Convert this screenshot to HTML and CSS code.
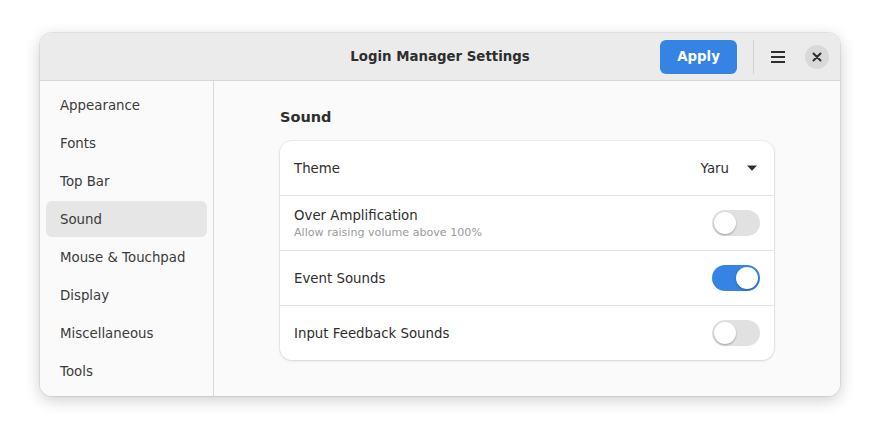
FILE: index.html
```html
<!DOCTYPE html>
<html>
<head>
<meta charset="utf-8">
<link rel="stylesheet" href="styles.css">
</head>
<body>
<div class="window">
  <header class="headerbar">
    <div class="title">Login Manager Settings</div>
    <div class="actions">
      <button class="apply">Apply</button>
      <span class="sep"></span>
      <button class="menu" aria-label="Menu">
        <svg width="16" height="16" viewBox="0 0 16 16"><rect x="1" y="2" width="14" height="2" fill="#2e2e2e"/><rect x="1" y="7" width="14" height="2" fill="#2e2e2e"/><rect x="1" y="12" width="14" height="2" fill="#2e2e2e"/></svg>
      </button>
      <button class="close" aria-label="Close">
        <svg width="10" height="10" viewBox="0 0 10 10"><path d="M1.5 1.5 L8.5 8.5 M8.5 1.5 L1.5 8.5" stroke="#2e2e2e" stroke-width="2" stroke-linecap="round"/></svg>
      </button>
    </div>
  </header>
  <div class="body">
    <nav class="sidebar">
      <div class="nav-item">Appearance</div>
      <div class="nav-item">Fonts</div>
      <div class="nav-item">Top Bar</div>
      <div class="nav-item active">Sound</div>
      <div class="nav-item">Mouse &amp; Touchpad</div>
      <div class="nav-item">Display</div>
      <div class="nav-item">Miscellaneous</div>
      <div class="nav-item">Tools</div>
    </nav>
    <main class="content">
      <div class="group">
        <h2 class="group-title">Sound</h2>
        <div class="card">
          <div class="row">
            <div class="label">Theme</div>
            <div class="dropdown">
              <span>Yaru</span>
              <svg width="10" height="6" viewBox="0 0 10 6"><path d="M0 0.5 L10 0.5 L5 5.8 Z" fill="#2e2e2e"/></svg>
            </div>
          </div>
          <div class="row">
            <div class="label">Over Amplification<div class="sub">Allow raising volume above 100%</div></div>
            <div class="switch"><span class="knob"></span></div>
          </div>
          <div class="row">
            <div class="label">Event Sounds</div>
            <div class="switch on"><span class="knob"></span></div>
          </div>
          <div class="row">
            <div class="label">Input Feedback Sounds</div>
            <div class="switch"><span class="knob"></span></div>
          </div>
        </div>
      </div>
    </main>
  </div>
</div>
</body>
</html>
```
FILE: styles.css
```css
* { box-sizing: border-box; }
html, body { margin: 0; padding: 0; }
body {
  background: #ffffff;
  font-family: "DejaVu Sans", "Noto Sans", sans-serif;
  font-size: 13.33px;
  color: #2e2e2e;
  padding: 33px 40px;
  height: 442px;
}
.window {
  width: 800px;
  height: 363px;
  border-radius: 12px;
  overflow: hidden;
  background: #fafafa;
  box-shadow: 0 4px 16px rgba(0,0,0,0.2), 0 0 0 1px rgba(0,0,0,0.07);
  display: flex;
  flex-direction: column;
}
.headerbar {
  height: 48px;
  flex: none;
  background: #ebebeb;
  border-bottom: 1px solid #d6d6d6;
  position: relative;
  display: flex;
  align-items: center;
  justify-content: flex-end;
  padding: 0 11px 0 6px;
}
.title {
  position: absolute;
  left: 0;
  right: 0;
  top: 0;
  bottom: 0;
  display: flex;
  align-items: center;
  justify-content: center;
  font-weight: bold;
  font-size: 13.33px;
  color: #2e2e2e;
  pointer-events: none;
}
.actions {
  display: flex;
  align-items: center;
  position: relative;
}
button {
  font-family: inherit;
  border: none;
  cursor: default;
}
.apply {
  width: 77px;
  height: 34px;
  border-radius: 6px;
  background: #3584e4;
  color: #ffffff;
  font-weight: bold;
  font-size: 13.33px;
  margin-right: 16px;
}
.sep {
  width: 1px;
  height: 34px;
  background: #d3d3d3;
  margin-right: 8px;
}
.menu {
  width: 32px;
  height: 32px;
  background: transparent;
  display: flex;
  align-items: center;
  justify-content: center;
  padding: 0;
  margin-right: 11px;
}
.close {
  width: 24px;
  height: 24px;
  border-radius: 50%;
  background: #d9d9d9;
  display: flex;
  align-items: center;
  justify-content: center;
  padding: 0;
}
.body {
  flex: 1;
  display: flex;
  min-height: 0;
}
.sidebar {
  width: 174px;
  flex: none;
  background: #fafafa;
  border-right: 1px solid #d9d9d9;
  padding: 6px 6px;
  display: flex;
  flex-direction: column;
  gap: 2px;
}
.nav-item {
  height: 36px;
  display: flex;
  align-items: center;
  padding: 0 14px;
  border-radius: 6px;
  color: #3a3a3a;
}
.nav-item.active {
  background: #e6e6e6;
}
.content {
  flex: 1;
  background: #fafafa;
  display: flex;
  justify-content: center;
  padding-top: 26px;
}
.group { width: 494px; }
.group-title {
  margin: 0 0 14px 0;
  font-size: 14.5px;
  font-weight: bold;
  color: #2e2e2e;
  line-height: 20px;
}
.card {
  background: #ffffff;
  border-radius: 12px;
  box-shadow: 0 0 0 1px rgba(0,0,0,0.05), 0 1px 3px rgba(0,0,0,0.1);
}
.row {
  height: 55px;
  display: flex;
  align-items: center;
  justify-content: space-between;
  padding: 0 14px;
  border-top: 1px solid #e3e3e3;
}
.row:first-child { border-top: none; height: 54px; }
.label { color: #2e2e2e; }
.sub {
  font-size: 11.1px;
  color: #9a9a9a;
  margin-top: 3px;
}
.dropdown {
  display: flex;
  align-items: center;
  gap: 18px;
  padding-right: 3px;
}
.switch {
  width: 48px;
  height: 26px;
  border-radius: 13px;
  background: #e1e1e1;
  position: relative;
}
.switch .knob {
  position: absolute;
  top: 2px;
  left: 2px;
  width: 22px;
  height: 22px;
  border-radius: 50%;
  background: #ffffff;
  box-shadow: 0 1px 2px rgba(0,0,0,0.3);
}
.switch.on { background: #3584e4; }
.switch.on .knob { left: 24px; }
```
